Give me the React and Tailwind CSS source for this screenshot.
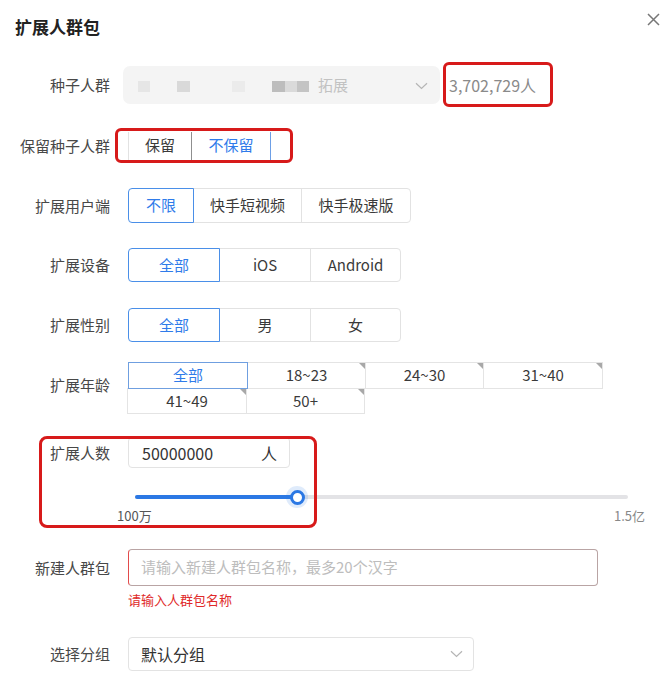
import React from "react";

function Label({ children, className = "" }) {
  return (
    <div className={"w-[110px] shrink-0 text-right text-[15px] leading-[20px] text-[#484848] " + className}>
      {children}
    </div>
  );
}

function Chevron({ className = "" }) {
  return (
    <svg className={className} width="13" height="8" viewBox="0 0 13 8" fill="none">
      <path d="M1 1.2L6.5 6.5L12 1.2" stroke="#b5b5b5" strokeWidth="1.2" />
    </svg>
  );
}

function Seg({ items, widths, h, selected = 0 }) {
  return (
    <div className="flex">
      {items.map((t, i) => {
        const sel = i === selected;
        const first = i === 0;
        const last = i === items.length - 1;
        return (
          <div
            key={t}
            style={{ width: widths[i], height: h }}
            className={
              "flex items-center justify-center text-[15px] border " +
              (first ? "rounded-l-[4px] " : "-ml-px ") +
              (last ? "rounded-r-[4px] " : "") +
              (sel
                ? "relative z-10 border-[#4a8fe8] text-[#2f7bea]"
                : "border-[#e2e2e2] text-[#3a3a3a]")
            }
          >
            {t}
          </div>
        );
      })}
    </div>
  );
}

function AgeCell({ t, sel, w, h }) {
  return (
    <div
      style={{ width: w, height: h }}
      className={
        "relative -ml-px -mt-px flex items-center justify-center text-[15px] border " +
        (sel ? "z-10 border-[#6f9fe0] text-[#2f7bea]" : "border-[#e4e4e4] text-[#3a3a3a]")
      }
    >
      {t}
      {!sel && (
        <div className="absolute top-0 right-0 w-0 h-0 border-t-[6px] border-l-[6px] border-t-[#a8a8a8] border-l-transparent" />
      )}
    </div>
  );
}

export default function App() {
  return (
    <div className="relative w-[672px] h-[688px] overflow-hidden bg-white font-['Noto_Sans_CJK_SC','Noto_Sans',sans-serif] text-[#444]">
      {/* header */}
      <div className="h-[54px] flex items-center justify-between pl-[15px] pr-[12px]">
        <div className="text-[17px] font-bold text-[#222] leading-[24px]">扩展人群包</div>
        <svg className="self-start mt-[13px]" width="13" height="13" viewBox="0 0 13 13">
          <path d="M1 1L12 12M12 1L1 12" stroke="#777" strokeWidth="1.5" />
        </svg>
      </div>

      {/* seed row */}
      <div className="mt-[8px] h-[45px] flex items-center">
        <Label>种子人群</Label>
        <div className="ml-[13px] w-[317px] h-[38px] rounded-[7px] bg-[#f4f4f4] flex items-center relative">
          <div className="absolute left-[15px] top-[15px] w-[12px] h-[11px] bg-[#e6e6e6]" />
          <div className="absolute left-[54px] top-[15px] w-[13px] h-[11px] bg-[#d9d9d9]" />
          <div className="absolute left-[109px] top-[15px] w-[13px] h-[11px] bg-[#ebebeb]" />
          <div className="absolute left-[149px] top-[15px] w-[13px] h-[11px] bg-[#bdbdbd]" />
          <div className="absolute left-[162px] top-[15px] w-[12px] h-[11px] bg-[#dadada]" />
          <div className="absolute left-[174px] top-[15px] w-[12px] h-[11px] bg-[#c4c4c4]" />
          <span className="absolute left-[195px] top-[8px] text-[15px] leading-[22px] text-[#c2c2c2]">拓展</span>
          <Chevron className="absolute left-[292px] top-[16px]" />
        </div>
        <div className="ml-[3px] w-[110px] h-[45px] border-[3px] border-[#d71a1a] rounded-[6px] flex items-center pl-[3px] text-[16px] text-[#8a8a8a]">
          3,702,729人
        </div>
      </div>

      {/* keep seed */}
      <div className="mt-[21px] h-[35px] flex items-center">
        <Label>保留种子人群</Label>
        <div className="ml-[5px] w-[178px] h-[35px] border-[3px] border-[#d71a1a] rounded-[6px] pl-[10px] flex items-center">
          <div className="flex h-[28px]">
            <div className="w-[64px] h-[28px] flex items-center justify-center text-[15px] text-[#3a3a3a] border-l border-[#e2e2e2] border-r-[#8f8f8f] border-r">
              保留
            </div>
            <div className="w-[79px] h-[28px] flex items-center justify-center text-[15px] text-[#2f7bea] border-r border-[#6d9fe6]">
              不保留
            </div>
          </div>
        </div>
      </div>

      {/* user end */}
      <div className="mt-[25px] h-[35px] flex items-center">
        <Label>扩展用户端</Label>
        <div className="ml-[18px]">
          <Seg items={["不限", "快手短视频", "快手极速版"]} widths={[66, 109, 110]} h={35} />
        </div>
      </div>

      {/* device */}
      <div className="mt-[25px] h-[34px] flex items-center">
        <Label>扩展设备</Label>
        <div className="ml-[18px]">
          <Seg items={["全部", "iOS", "Android"]} widths={[92, 92, 91]} h={34} />
        </div>
      </div>

      {/* gender */}
      <div className="mt-[26px] h-[34px] flex items-center">
        <Label>扩展性别</Label>
        <div className="ml-[18px]">
          <Seg items={["全部", "男", "女"]} widths={[92, 92, 91]} h={34} />
        </div>
      </div>

      {/* age */}
      <div className="mt-[21px] flex items-start">
        <Label className="mt-[12px]">扩展年龄</Label>
        <div className="ml-[19px] flex flex-col">
          <div className="flex">
            <AgeCell t="全部" sel w={120} h={27} />
            <AgeCell t="18~23" w={119} h={27} />
            <AgeCell t="24~30" w={119} h={27} />
            <AgeCell t="31~40" w={120} h={27} />
          </div>
          <div className="flex -ml-px">
            <AgeCell t="41~49" w={120} h={26} />
            <AgeCell t="50+" w={119} h={26} />
          </div>
        </div>
      </div>

      {/* count */}
      <div className="relative mt-[22px] h-[92px]">
        <div className="h-[33px] flex items-center">
          <Label>扩展人数</Label>
          <div className="ml-[18px] w-[162px] h-[31px] border border-[#e3e3e3] rounded-[4px] flex items-center justify-between pl-[13px] pr-[12px] text-[16px] text-[#333]">
            <span>50000000</span>
            <span>人</span>
          </div>
        </div>
        <div className="relative ml-[135px] mt-[26px] w-[493px] h-[4px] rounded-full bg-[#e3e3e6]">
          <div className="absolute left-0 top-0 h-[4px] w-[162px] rounded-full bg-[#2b78e4]" />
          <div className="absolute left-[151px] top-[-9px] w-[22px] h-[22px] rounded-full bg-[#2b78e4]/15 flex items-center justify-center">
            <div className="w-[15px] h-[15px] rounded-full bg-white border-[3px] border-[#2b78e4]" />
          </div>
        </div>
        <div className="ml-[117px] mt-[8px] w-[528px] flex justify-between text-[13px] leading-[18px] text-[#555]">
          <span>100万</span>
          <span className="text-[#888]">1.5亿</span>
        </div>
        <div className="absolute left-[39px] top-0 w-[278px] h-[92px] border-[3px] border-[#d71a1a] rounded-[8px]" />
      </div>

      {/* new package */}
      <div className="mt-[21px] h-[37px] flex items-center">
        <Label>新建人群包</Label>
        <div className="ml-[18px] w-[470px] h-[37px] border border-[#b9a4a4] border-l-[#e24b4b] rounded-[4px] flex items-center pl-[12px] text-[15px] text-[#bdbdbd]">
          请输入新建人群包名称，最多20个汉字
        </div>
      </div>
      <div className="ml-[128px] mt-[5px] text-[13px] leading-[18px] text-[#e02a2a]">请输入人群包名称</div>

      {/* group */}
      <div className="mt-[28px] h-[34px] flex items-center">
        <Label>选择分组</Label>
        <div className="ml-[18px] w-[346px] h-[34px] border border-[#e3e3e3] rounded-[4px] flex items-center justify-between pl-[12px] pr-[10px] text-[16px] text-[#333]">
          <span>默认分组</span>
          <Chevron />
        </div>
      </div>
    </div>
  );
}
